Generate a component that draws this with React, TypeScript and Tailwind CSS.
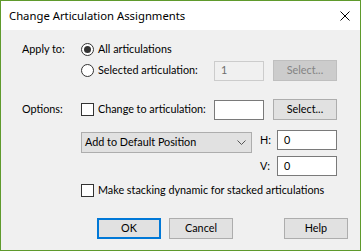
import React from 'react';

const Radio = ({ checked }: { checked?: boolean }) => (
  <span className="flex h-[13px] w-[13px] shrink-0 items-center justify-center rounded-full border border-[#333333] bg-white">
    {checked && <span className="h-[7px] w-[7px] rounded-full bg-[#333333]" />}
  </span>
);

const Check = () => <span className="block h-[13px] w-[13px] shrink-0 border border-[#333333] bg-white" />;

const Button = ({ children, disabled, primary }: { children: React.ReactNode; disabled?: boolean; primary?: boolean }) => (
  <div
    className={
      'flex h-[21px] w-[64px] shrink-0 items-center justify-center ' +
      (disabled
        ? 'border border-[#bfbfbf] bg-[#cccccc] text-[#838383]'
        : primary
          ? 'border-2 border-[#0078d7] bg-[#e1e1e1] text-black'
          : 'border border-[#adadad] bg-[#e1e1e1] text-black')
    }
  >
    {children}
  </div>
);

const TextBox = ({ value, disabled, width }: { value?: string; disabled?: boolean; width: string }) => (
  <div
    className={
      'flex h-[20px] shrink-0 items-center px-[6px] ' +
      width +
      (disabled ? ' border border-[#cccccc] bg-[#f0f0f0] text-[#6d6d6d]' : ' border border-[#7a7a7a] bg-white text-black')
    }
  >
    {value}
  </div>
);

export default function App() {
  return (
    <div className="flex h-[251px] w-[361px] flex-col whitespace-nowrap border border-[#5f9a2c] bg-[#f0f0f0] font-['Lato',sans-serif] text-[10.8px] leading-none text-black">
      <div className="flex h-[29px] shrink-0 items-center justify-between bg-white pl-[8px] pr-[10px]">
        <span className="pt-[1px] font-['Noto_Sans',sans-serif] text-[11.3px]">Change Articulation Assignments</span>
        <svg width="10" height="10" viewBox="0 0 10 10" className="mt-[1px]">
          <path d="M0.5 0.5 L9.5 9.5 M9.5 0.5 L0.5 9.5" stroke="#000" strokeWidth="1" />
        </svg>
      </div>

      <div className="flex flex-1 flex-col pl-[21px] pt-[9px]">
        <div className="flex h-[21px] items-center">
          <span className="w-[59px] shrink-0">Apply to:</span>
          <Radio checked />
          <span className="ml-[4px]">All articulations</span>
        </div>
        <div className="flex h-[21px] items-center">
          <span className="w-[59px] shrink-0" />
          <Radio />
          <span className="ml-[4px] w-[116px] shrink-0">Selected articulation:</span>
          <TextBox value="1" disabled width="w-[50px]" />
          <span className="w-[9px] shrink-0" />
          <Button disabled>Select...</Button>
        </div>

        <div className="mt-[18px] flex h-[21px] items-center">
          <span className="w-[59px] shrink-0">Options:</span>
          <Check />
          <span className="ml-[4px] w-[116px] shrink-0">Change to articulation:</span>
          <TextBox width="w-[50px]" />
          <span className="w-[9px] shrink-0" />
          <Button>Select...</Button>
        </div>

        <div className="mt-[10px] flex items-start">
          <span className="w-[59px] shrink-0" />
          <div className="mt-[2px] flex h-[21px] w-[171px] shrink-0 items-center justify-between border border-[#adadad] bg-[#e1e1e1] pl-[3px] pr-[5px]">
            <span>Add to Default Position</span>
            <svg width="9" height="5" viewBox="0 0 9 5">
              <path d="M0.5 0.5 L4.5 4.5 L8.5 0.5" fill="none" stroke="#555" strokeWidth="1" />
            </svg>
          </div>
          <div className="ml-[8px] flex flex-col gap-[6px]">
            <div className="flex h-[20px] items-center">
              <span className="w-[17px] shrink-0">H:</span>
              <TextBox value="0" width="w-[60px]" />
            </div>
            <div className="flex h-[20px] items-center">
              <span className="w-[17px] shrink-0">V:</span>
              <TextBox value="0" width="w-[60px]" />
            </div>
          </div>
        </div>

        <div className="mt-[8px] flex h-[13px] items-center">
          <span className="w-[59px] shrink-0" />
          <Check />
          <span className="ml-[4px]">Make stacking dynamic for stacked articulations</span>
        </div>

        <div className="mt-[21px] flex items-center">
          <span className="w-[75px] shrink-0" />
          <Button primary>OK</Button>
          <span className="w-[8px] shrink-0" />
          <Button>Cancel</Button>
          <span className="w-[51px] shrink-0" />
          <Button>Help</Button>
        </div>
      </div>
    </div>
  );
}
